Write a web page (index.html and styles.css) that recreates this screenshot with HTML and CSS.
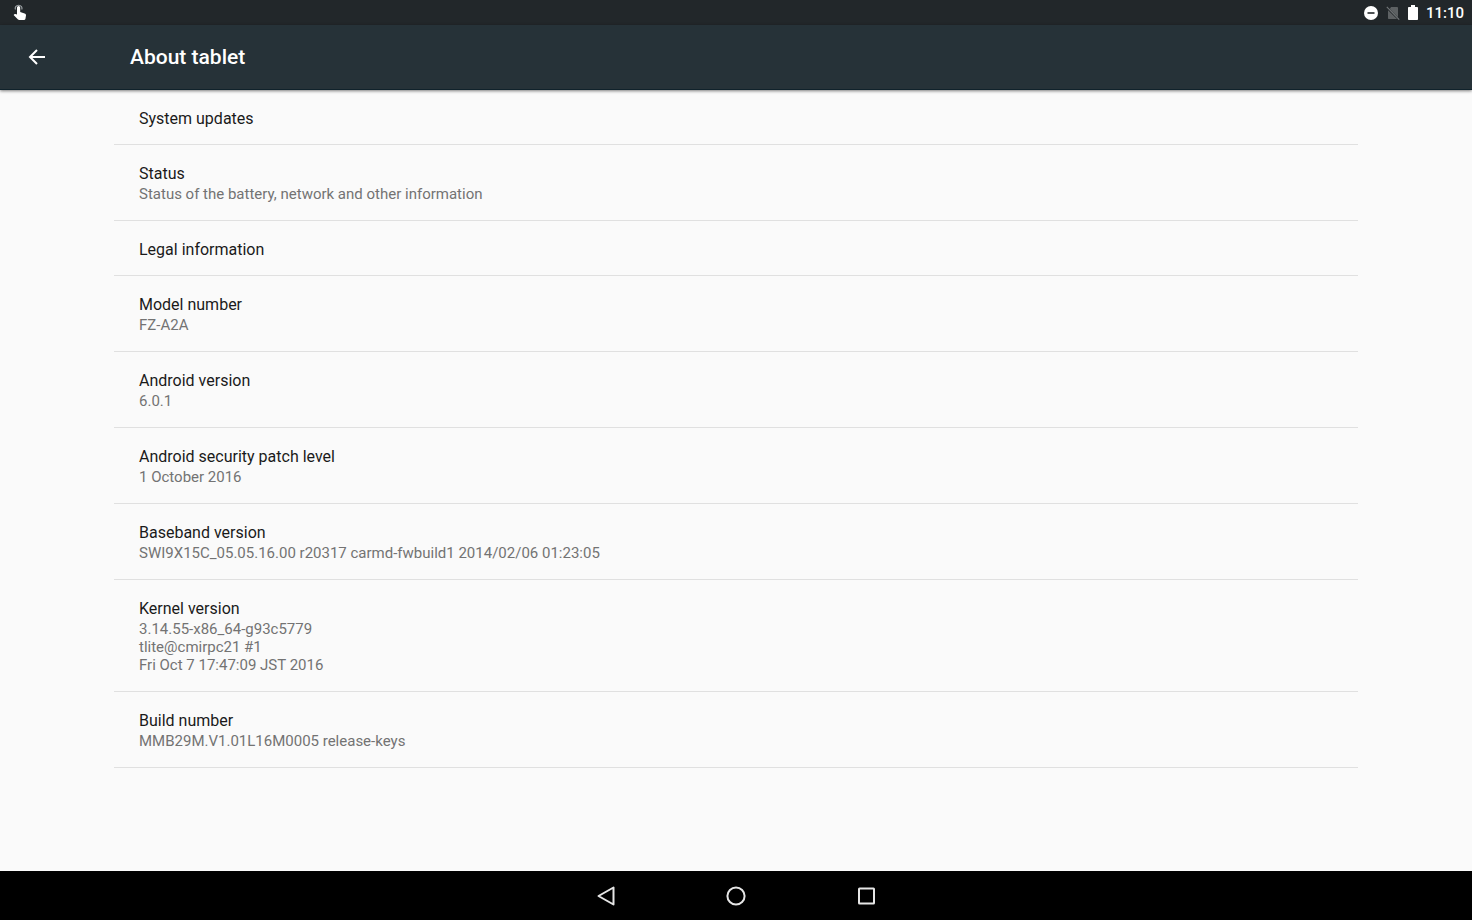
FILE: index.html
```
<!DOCTYPE html>
<html lang="en-GB">
<head>
    <meta charset="UTF-8">
    <meta name="viewport" content="width=device-width, initial-scale=1">
    <title>About tablet</title>
    <link rel="stylesheet" href="styles.css">
</head>
<body>

    <!-- Status bar -->
    <div class="status-bar">
        <svg class="touch" width="14" height="18" viewBox="0 0 14 18">
            <path d="M2.5 5.5a3.4 3 0 1 1 6.2 0" fill="none" stroke="#9aa0a3" stroke-width="1.2"/>
            <path d="M4 3.600a1.600 1.600 0 0 1 3.200 0v4.400l4.400 1.600c1 .4 1.500 1 1.400 2l-.6 3.300c-.2.7-.7 1.100-1.400 1.100H6.200c-.5 0-.9-.2-1.200-.5L.6 11.100l.8-.8c.3-.3.7-.3 1-.2l1.600.5z" fill="#fff"/>
        </svg>
        <div class="status-icons">
            <svg width="14" height="16" viewBox="0 0 14 16">
                <circle cx="7" cy="8" r="7" fill="#fff"/>
                <path d="M3.5 8h7" stroke="#22272a" stroke-width="1.6"/>
            </svg>
            <svg width="14" height="16" viewBox="0 0 14 16">
                <path d="M5 2h6.2c.5 0 .8.3.8.8v9.4L3.8 4z" fill="#5d6163"/>
                <path d="M2 5.2 11 14H3c-.6 0-1-.4-1-1z" fill="#5d6163"/>
                <path d="M.8 1.8 13.2 14.6" stroke="#74787a" stroke-width="1.1"/>
            </svg>
            <svg width="10" height="16" viewBox="0 0 10 16">
                <path d="M3 0h4v2h2.200c.5 0 .8.3.8.8v11.400c0 .5-.3.8-.8.8H.8c-.5 0-.8-.3-.8-.8V2.800C0 2.300.3 2 .8 2H3z" fill="#fff"/>
            </svg>
            <span class="clock">11:10</span>
        </div>
    </div>

    <!-- App bar -->
    <header class="app-bar">
        <button type="button" class="back" aria-label="Navigate up">
            <svg width="18" height="18" viewBox="0 0 18 18">
                <path d="M17 9H2.500M9 2 2 9l7 7" fill="none" stroke="#fff" stroke-width="2"/>
            </svg>
        </button>
        <h1>About tablet</h1>
    </header>

    <main>
        <ul class="list">
            <li><a href="#updates" class="item single"><span class="title">System updates</span></a></li>
            <li>
                <a href="#status" class="item">
                    <span class="title">Status</span>
                    <span class="summary">Status of the battery, network and other information</span>
                </a>
            </li>
            <li><a href="#legal" class="item single"><span class="title">Legal information</span></a></li>
            <li class="item">
                <span class="title">Model number</span>
                <span class="summary">FZ-A2A</span>
            </li>
            <li class="item">
                <span class="title">Android version</span>
                <span class="summary">6.0.1</span>
            </li>
            <li class="item">
                <span class="title">Android security patch level</span>
                <span class="summary">1 October 2016</span>
            </li>
            <li class="item">
                <span class="title">Baseband version</span>
                <span class="summary">SWI9X15C_05.05.16.00 r20317 carmd-fwbuild1 2014/02/06 01:23:05</span>
            </li>
            <li class="item">
                <span class="title">Kernel version</span>
                <span class="summary">3.14.55-x86_64-g93c5779<br>tlite@cmirpc21 #1<br>Fri Oct 7 17:47:09 JST 2016</span>
            </li>
            <li class="item">
                <span class="title">Build number</span>
                <span class="summary">MMB29M.V1.01L16M0005 release-keys</span>
            </li>
        </ul>
    </main>

    <!-- Navigation bar -->
    <nav class="nav-bar">
        <button type="button" aria-label="Back">
            <svg width="22" height="22" viewBox="0 0 22 22">
                <path d="M18.500 2.500v17L3.500 11z" fill="none" stroke="#e6e6e6" stroke-width="2" stroke-linejoin="round"/>
            </svg>
        </button>
        <button type="button" aria-label="Home">
            <svg width="22" height="22" viewBox="0 0 22 22">
                <circle cx="11" cy="11" r="8.600" fill="none" stroke="#e6e6e6" stroke-width="2"/>
            </svg>
        </button>
        <button type="button" aria-label="Overview">
            <svg width="22" height="22" viewBox="0 0 22 22">
                <rect x="4" y="3.500" width="15" height="15" rx=".5" fill="none" stroke="#e6e6e6" stroke-width="2"/>
            </svg>
        </button>
    </nav>

</body>
</html>
```
FILE: styles.css
```
* {box-sizing: border-box}

body {
    margin: 0;
    min-height: 100vh;
    display: flex;
    flex-direction: column;
    background-color: #fafafa;
    color: #1a1a1a;
    font: 16px/22px Roboto, sans-serif;
}

button {
    padding: 0;
    border: 0;
    background: none;
    display: flex;
    justify-content: center;
    align-items: center;
    cursor: pointer;
}

svg {display: block}

/* ----- Status bar ----- */

.status-bar {
    height: 25px;
    padding: 0 8px 0 13px;
    display: flex;
    justify-content: space-between;
    align-items: center;
    background-color: #22272a;
}

.status-icons {
    display: flex;
    align-items: center;
    gap: 8px;
}

.clock {
    color: #fff;
    font-size: 15px;
    font-weight: 500;
}

/* ----- App bar ----- */

.app-bar {
    height: 65px;
    display: flex;
    align-items: center;
    background-color: #263238;
    border-bottom: 1px solid #10222b;
    box-shadow: 0 1px 3px rgba(0, 0, 0, 0.5);
}

.back {
    width: 74px;
    height: 64px;
}

h1 {
    margin: 0 0 0 56px;
    color: #fff;
    font-size: 21px;
    font-weight: 500;
    line-height: 24px;
}

/* ----- Settings list ----- */

main {
    flex: 1;
    padding: 0 114px;
}

.list {
    margin: 0;
    padding: 0;
    list-style: none;
}

.item {
    padding: 18px 25px 17px;
    display: flex;
    flex-direction: column;
    border-bottom: 1px solid #e0e0e0;
    color: inherit;
    text-decoration: none;
}

.single {
    padding-bottom: 14px;
}

.summary {
    color: #737373;
    font-size: 15px;
    line-height: 18px;
}

/* ----- Navigation bar ----- */

.nav-bar {
    height: 49px;
    display: flex;
    justify-content: center;
    gap: 50px;
    background-color: #000;
}

.nav-bar button {
    width: 80px;
    height: 49px;
}
```
